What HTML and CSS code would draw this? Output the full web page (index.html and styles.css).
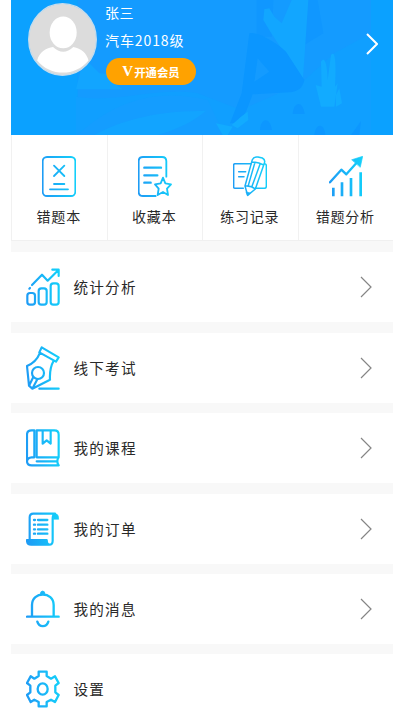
FILE: index.html
```html
<!DOCTYPE html>
<html lang="zh-CN">
<head>
<meta charset="utf-8">
<title>个人中心</title>
<link rel="stylesheet" href="styles.css">
</head>
<body>
<svg class="defs" width="0" height="0" aria-hidden="true">
  <linearGradient id="g" gradientUnits="userSpaceOnUse" x1="0" y1="60" x2="102" y2="50">
    <stop offset="0" stop-color="#1e9cf5"/><stop offset="1" stop-color="#13d0fa"/>
  </linearGradient>
</svg>
<main class="app">
  <header class="hero">
    <svg class="scene" viewBox="0 0 1146 405" aria-hidden="true">
      <path fill="#149bff" d="M200 0H1080V405H200Z"/>
      <path fill="#109fff" d="M195 405V290C330 310 430 260 560 280L690 330 870 250 970 160 1080 100V405Z"/>
      <path fill="#149dff" d="M200 405C300 310 430 260 590 300L640 405Z"/>
      <path fill="#12a5ff" d="M195 268L208 215 235 190 265 220 295 222 308 250 335 268Z"/>
      <path fill="#12a4ff" d="M250 405C350 350 460 333 585 332C540 370 490 390 440 405Z"/>
      <path fill="#1097ff" d="M737 0H787L783 110H737ZM890 0H920L937 100 880 135 870 80Z"/>
      <path fill="#12a6ff" d="M842 0H892L876 235 820 160 778 95 757 60 760 28 775 25 790 50 812 70Z"/>
      <path fill="#0b96ff" d="M715 100C740 93 800 130 825 155L880 240C875 265 860 275 835 277L725 283 705 335 695 350 670 370 657 370 692 280Z"/>
      <path fill="#149bff" d="M740 175L775 215 730 245Z"/>
      <path fill="#12abff" d="M710 335L712 360 680 385 662 375 690 350ZM615 370L665 380 650 405H635ZM930 320L914 255 932 260 930 185C940 170 948 185 950 240L960 165C970 152 977 170 972 260L980 250 970 320ZM975 320V285L985 265 993 310Z"/>
      <path fill="#0d97ff" d="M845 342C848 305 875 300 881 342ZM747 390C750 352 777 350 783 390ZM910 405C915 367 940 370 943 405ZM1020 405L1050 363 1045 405Z"/>
    </svg>
    <svg class="avatar" viewBox="0 0 204 216" aria-hidden="true">
      <defs><clipPath id="a"><ellipse cx="102" cy="108" rx="98" ry="104"/></clipPath></defs>
      <ellipse cx="102" cy="108" rx="100" ry="106" fill="#dcdcdc" stroke="#c5dcec" stroke-width="4"/>
      <g clip-path="url(#a)"><ellipse cx="104" cy="87" rx="40" ry="47" fill="#fff"/>
      <path fill="#fff" d="M27 170C34 143 55 133 74 130C93 149 115 149 134 130C158 134 173 148 179 170C140 218 66 218 27 170Z"/></g>
    </svg>
    <div class="profile">
      <div class="name">张三</div>
      <div class="grade">汽车2018级</div>
      <div class="vip"><b class="vip-mark">V</b>开通会员</div>
    </div>
    <svg class="hero-arrow" viewBox="0 0 12 22" aria-hidden="true"><path d="M1 1L11 11 1 21"/></svg>
  </header>

  <nav class="tools">
    <div class="tool">
      <svg class="icon" viewBox="0 0 102 123"><rect x="2" y="3" width="98" height="117" rx="13"/><path d="M36 29L67 60M67 29L36 60M36 84H67M24 100H78"/></svg>
      <span>错题本</span>
    </div>
    <div class="tool">
      <svg class="icon" viewBox="0 0 102 123"><path d="M53 120H15Q2 120 2 107V16Q2 3 15 3H72Q85 3 85 16V62"/><path class="bold" d="M19 35H69M19 58H58M19 80H38"/><path d="M75 65L82 82 99 85 87 98 90 117 75 108 59 117 62 98 51 85 68 82Z"/></svg>
      <span>收藏本</span>
    </div>
    <div class="tool">
      <svg class="icon pencil" viewBox="0 0 102 123"><path d="M55 23H6Q2 23 2 27V93Q2 97 6 97H31M94 23Q100 23 100 29V91Q100 97 94 97H69M17 47H38M17 62H33"/><path d="M58 11Q62 1 75 3L88 6Q98 11 94 22L67 99 44 118 36 90ZM56 18Q75 18 92 27M36 90Q54 88 67 99M65 22L46 88M81 25L57 91"/><path class="solid" d="M40 108L52 111 44 118Z"/></svg>
      <span>练习记录</span>
    </div>
    <div class="tool">
      <svg class="icon" viewBox="0 0 102 123"><path class="bold" d="M3 79L37 41 52 55 87 16"/><path class="solid" d="M69 11L101 1 94 33Z"/><path class="bar" d="M13 95V121M39 79V121M66 66V121M95 49V121"/></svg>
      <span>错题分析</span>
    </div>
  </nav>

  <section class="list">
    <div class="row">
      <svg class="icon" viewBox="0 0 102 132"><rect x="4" y="84" width="23" height="35" rx="8"/><rect x="38" y="70" width="24" height="49" rx="8"/><rect x="74" y="55" width="24" height="64" rx="8"/><path d="M10 71L12 69M18 60L48 29 65 47 95 17M79 14H98V33"/></svg>
      <span>统计分析</span><svg class="arrow" viewBox="0 0 12 22"><path d="M1 1L11 11 1 21"/></svg>
    </div>
    <div class="row">
      <svg class="icon" viewBox="0 0 102 132"><path d="M47 4L98 34 90 47 40 19ZM41 22Q31 48 3 60L9 119 19 128 72 101Q70 67 83 44M9 119L22 93M19 128L34 100"/><circle cx="36" cy="81" r="18"/><path d="M40 128H98"/></svg>
      <span>线下考试</span><svg class="arrow" viewBox="0 0 12 22"><path d="M1 1L11 11 1 21"/></svg>
    </div>
    <div class="row">
      <svg class="icon" viewBox="0 0 102 132"><path d="M98 94H32V13H85Q98 13 98 26V94Q90 105 98 118H17Q3 118 3 105V26Q3 13 17 13H25V94H17Q3 95 3 107M32 106H94M50 14V53L62 43 74 53V14"/></svg>
      <span>我的课程</span><svg class="arrow" viewBox="0 0 12 22"><path d="M1 1L11 11 1 21"/></svg>
    </div>
    <div class="row">
      <svg class="icon" viewBox="0 0 102 132"><path d="M11 96V31Q11 20 22 20H87Q80 23 80 34V101Q80 113 70 113H15Q3 113 3 99H62Q62 113 70 113"/><path class="solid" d="M82 36V27Q85 18 92 21Q98 24 98 36ZM3 99H62L68 113H15Q5 112 3 99Z"/><path class="bold" d="M24 39H27M36 39H64M24 53H27M36 53H64M24 67H27M36 67H64M24 80H27M36 80H64"/></svg>
      <span>我的订单</span><svg class="arrow" viewBox="0 0 12 22"><path d="M1 1L11 11 1 21"/></svg>
    </div>
    <div class="row">
      <svg class="icon" viewBox="0 0 102 132"><path class="bold" d="M3 89H98M18 89V54C18 12 83 12 83 54V89M34 104C39 122 62 122 67 104"/><path class="solid" d="M43 21Q43 12 50 12T57 21Z"/></svg>
      <span>我的消息</span><svg class="arrow" viewBox="0 0 12 22"><path d="M1 1L11 11 1 21"/></svg>
    </div>
    <div class="row">
      <svg class="icon" viewBox="0 0 102 132"><path class="bold" d="M38 14H62V27L75 35 87 28 98 48 88 56V76L98 84 87 105 75 98 62 105V118H38V105L25 98 14 105 3 84 13 76V56L3 48 14 28 25 35 38 27Z"/><ellipse class="bold" cx="50" cy="66" rx="15" ry="17"/></svg>
      <span>设置</span>
    </div>
  </section>
</main>
</body>
</html>
```
FILE: styles.css
```css
* { box-sizing: border-box; }
body {
  margin: 0;
  height: 711px;
  overflow: hidden;
  background: #fff;
  color: #292929;
  font-family: "Noto Sans CJK SC", sans-serif;
}
.defs { position: absolute; }
.app {
  width: 382px;
  height: 711px;
  margin-left: 11px;
  overflow: hidden;
  background: #f8f8f8;
}
.hero {
  position: relative;
  display: flex;
  align-items: flex-start;
  height: 135px;
  padding: 3px 15px 0 17px;
  background: #0ba1ff;
  color: #fff;
}
.scene { position: absolute; left: 0; top: 0; width: 382px; height: 135px; }
.avatar { position: relative; width: 69px; height: 73px; }
.profile { position: relative; margin: -1px 0 0 8px; font-size: 14px; line-height: 20px; }
.name { letter-spacing: .5px; }
.grade { margin-top: 8px; letter-spacing: .9px; }
.vip {
  display: flex;
  align-items: center;
  justify-content: center;
  width: 90px;
  height: 27px;
  margin: 8px 0 0 1px;
  border-radius: 14px;
  background: #ffa200;
  font-size: 11.4px;
  font-weight: 700;
}
.vip-mark { margin-right: 1px; font: 700 15px "Liberation Serif", serif; }
.hero-arrow { position: relative; width: 12px; height: 22px; margin: 30px 0 0 auto; }
.hero-arrow path { fill: none; stroke: #fff; stroke-width: 2; }
.tools {
  display: grid;
  grid-template-columns: repeat(4, 1fr);
  height: 106px;
  border-bottom: 1px solid #f0f0f0;
  background: #fff;
}
.tool {
  display: flex;
  flex-direction: column;
  align-items: center;
  padding-top: 21px;
  border-left: 1px solid #f1f1f1;
  font-size: 14px;
  line-height: 20px;
  letter-spacing: .8px;
}
.tool .icon { width: 34px; height: 41px; margin-bottom: 9px; }
.tool span { margin-left: -1px; }
.icon { flex: none; fill: none; stroke: url(#g); stroke-width: 5.5; stroke-linejoin: round; stroke-linecap: round; }
.row .icon { stroke-width: 6.5; }
.icon .bold { stroke-width: 7; }
.icon .bar { stroke-width: 8; stroke-linecap: butt; }
.icon .solid { fill: url(#g); stroke-width: 2; }
.pencil { stroke-width: 4.5; }
.list { display: grid; grid-auto-rows: 70px; gap: 10.4px; padding-top: 11.4px; }
.row {
  display: flex;
  align-items: center;
  padding: 0 21px 0 14.5px;
  background: #fff;
  font-size: 14.6px;
  letter-spacing: 1.2px;
}
.row .icon { width: 34px; height: 44px; margin-right: 14px; }
.row span { line-height: 22px; }
.arrow { width: 12px; height: 22px; margin-left: auto; fill: none; stroke: #858585; stroke-width: 1.2; }
```
